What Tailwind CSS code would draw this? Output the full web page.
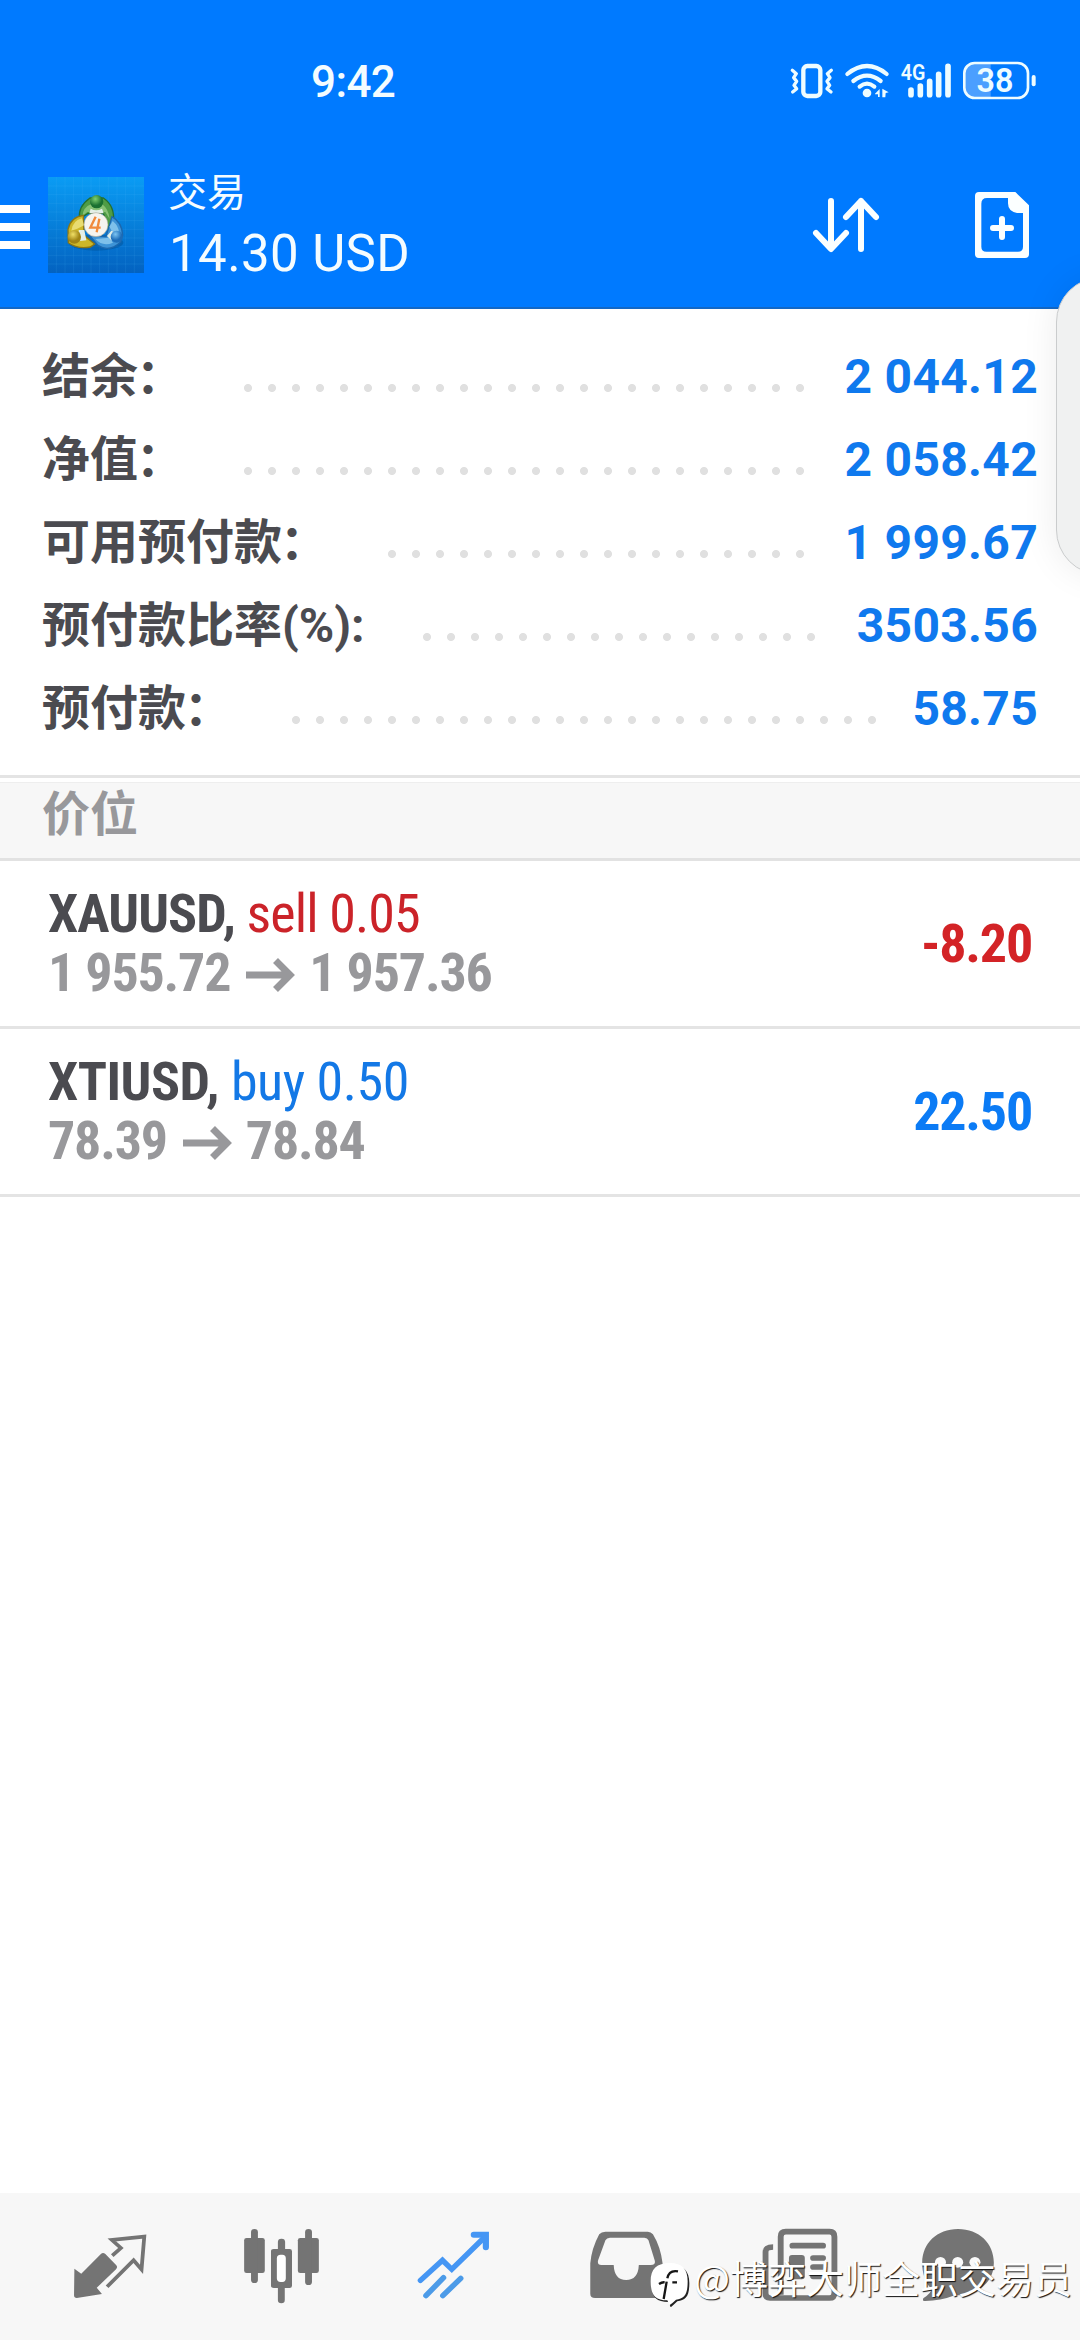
<!DOCTYPE html>
<html lang="zh-CN">
<head>
<meta charset="utf-8">
<title>交易</title>
<script src="https://cdn.jsdelivr.net/npm/@tailwindcss/browser@4"></script>
</head>
<body class="relative flex h-[2340px] w-[1080px] flex-col overflow-hidden bg-white font-['Roboto','Noto_Sans_CJK_SC',sans-serif]">

<header class="flex h-[309px] shrink-0 flex-col border-b-2 border-[#1368c6] bg-[#007aff] text-[#f4fcff]">
  <!-- status bar -->
  <div class="flex h-[150px] shrink-0 items-start pt-[52px]">
    <div class="ml-[311px] h-[60px] w-[100px] text-[44px] leading-[60px] font-medium tracking-[-0.6px]">9:42</div>
    <svg class="mt-[-12px] ml-[349px] h-[80px] w-[320px]" viewBox="0 0 960 240" fill="none" stroke="#eefcff" stroke-linecap="round" stroke-linejoin="round">
      <rect x="130" y="78" width="51" height="90" rx="12" stroke-width="13"/>
      <path d="M97 91l12 10-8 12 9 11-8 12 8 10-12 10M214 91l-12 10 8 12-9 11 8 12-8 10 12 10" stroke-width="10"/>
      <path d="M262 102Q321 54 380 102M280 123Q321 91 362 123M299 140Q321 122 343 140" stroke-width="12.500"/>
      <circle cx="321" cy="159" r="13" fill="#eefcff" stroke="none"/>
      <path d="M345 161l14-14v24h-5v-8h-9zM367 146l19 11-9 2-1 13h-9z" fill="#eefcff" stroke="none"/>
      <text x="422" y="120" font-size="65" font-weight="600" fill="#eefcff" stroke="none" textLength="74" lengthAdjust="spacingAndGlyphs">4G</text>
      <path d="M453 150v14M481 138v26M509 124v40M536 103v61M564 79v85" stroke-width="17"/>
      <path d="M640 71h52v102h-52q-24 0-24-24V95q0-24 24-24z" fill="#4b9fff" stroke="none"/>
      <rect x="613" y="69" width="191" height="105" rx="31" stroke-width="8"/>
      <path d="M821 111v22" stroke-width="12"/>
      <text x="705" y="156" font-size="97" font-weight="600" fill="#eefcff" stroke="none" text-anchor="middle">38</text>
    </svg>
  </div>
  <!-- title bar -->
  <div class="flex h-[157px] items-start">
    <div class="flex w-[30px] flex-col gap-[10px] pt-[55px]">
      <div class="h-2 bg-white"></div>
      <div class="h-2 bg-white"></div>
      <div class="h-2 bg-white"></div>
    </div>
    <svg class="mt-[27px] ml-[18px] size-[96px]" viewBox="24 21 288 288">
      <defs>
        <linearGradient id="bg" x1="0" y1="0" x2="0" y2="1"><stop offset="0" stop-color="#0a9cf4"/><stop offset="1" stop-color="#0362c0"/></linearGradient>
        <radialGradient id="gr" cx=".4" cy=".3"><stop offset="0" stop-color="#7fd070"/><stop offset="1" stop-color="#1a7030"/></radialGradient>
        <radialGradient id="ye" cx=".4" cy=".3"><stop offset="0" stop-color="#f0df66"/><stop offset="1" stop-color="#a08414"/></radialGradient>
        <radialGradient id="bl" cx=".4" cy=".3"><stop offset="0" stop-color="#7cc4f2"/><stop offset="1" stop-color="#1c6cb8"/></radialGradient>
      </defs>
      <path fill="url(#bg)" d="M24 21h288v288H24z"/>
      <path d="M49 21v288M75 21v288M101 21v288M127 21v288M153 21v288M179 21v288M205 21v288M231 21v288M257 21v288M283 21v288M24 48h288M24 74h288M24 100h288M24 126h288M24 152h288M24 178h288M24 204h288M24 230h288M24 256h288M24 282h288" stroke="#55b8f5" stroke-opacity=".2" stroke-width="2"/>
      <ellipse cx="168" cy="218" rx="82" ry="24" fill="#034f92" opacity=".45"/>
      <path d="M119 146Q113 110 150 84L190 84Q226 108 220 158L204 174 190 130H144z" fill="#4f9c46" stroke="#24702f" stroke-width="4"/>
      <path d="M128 137Q129 112 153 103L187 103Q206 118 209 147L196 126H142z" fill="#86c174"/>
      <path d="M130 136Q92 141 84 178L85 218Q112 238 151 231L164 222 132 196z" fill="#cdb728" stroke="#8a7616" stroke-width="4"/>
      <path d="M126 145Q99 151 94 182L112 176 132 166z" fill="#e8dc70"/>
      <path d="M216 140Q246 157 248 195L242 216Q208 248 175 227L149 197 198 200z" fill="#3d93d6" stroke="#1c67ad" stroke-width="4"/>
      <path d="M218 153Q236 168 237 187L216 184 208 170zM166 207Q188 231 219 218L207 203z" fill="#7ec0ea"/>
      <path d="M152 116q16 10 34 0l5 14h-43zM116 180l17 0 6 31-20 2zM201 198l13-16 8 4-7 26z" fill="#e4efe8"/>
      <circle cx="170" cy="95" r="20" fill="url(#gr)"/>
      <circle cx="103" cy="201" r="20" fill="url(#ye)"/>
      <circle cx="230" cy="200" r="18" fill="url(#bl)"/>
      <circle cx="168" cy="164" r="36" fill="#f6f4ef" stroke="#999984" stroke-width="1.5"/>
      <path d="M167 140L151 173H182M178 146L170 187" fill="none" stroke="#f08a3c" stroke-width="7"/>
    </svg>
    <div class="ml-6 flex flex-col gap-[6px] pt-[18px]">
      <div class="h-[50px] text-[39px] leading-[50px]">交易</div>
      <div class="h-[60px] pl-px text-[51px] leading-[60px] tracking-[0.4px]">14.30 USD</div>
    </div>
    <svg class="mt-[10px] ml-auto h-[147px] w-[320px]" viewBox="0 0 960 441" fill="none" stroke="#fbffff" stroke-width="18" stroke-linecap="round" stroke-linejoin="round">
      <path d="M213 123v143M168 219l45 48 45-48M303 267V123M258 171l45-48 45 48"/>
      <path d="M645 108q0-12 12-12H766L807 136V282q0 12-12 12H657q-12 0-12-12zM664 131V260q0 15 15 15H774q15 0 15-15V159H771Q744 154 744 130V114H681Q664 114 664 131z" fill="#fbffff" fill-rule="evenodd" stroke="none"/>
      <path d="M699 204h54M726 177v54"/>
    </svg>
  </div>
</header>

<!-- account summary -->
<section class="flex h-[469px] shrink-0 flex-col border-b-[3px] border-[#e4e4e4] px-[42px] pt-[26px] text-[48px] font-bold text-[#4b4b50]">
  <div class="flex h-[83px] items-center">
    <div class="w-[194px] leading-[83px] whitespace-nowrap">结余<span class="ml-[-2px]">：</span></div>
    <div class="mt-[23px] h-6 w-[576px] bg-[radial-gradient(circle,#e0e0e0_3.6px,transparent_4.4px)] bg-[size:24px_24px]"></div>
    <div class="ml-auto leading-[83px] tracking-[0.3px] text-[#0f79ee]">2 044.12</div>
  </div>
  <div class="flex h-[83px] items-center">
    <div class="w-[194px] leading-[83px] whitespace-nowrap">净值<span class="ml-[-2px]">：</span></div>
    <div class="mt-[23px] h-6 w-[576px] bg-[radial-gradient(circle,#e0e0e0_3.6px,transparent_4.4px)] bg-[size:24px_24px]"></div>
    <div class="ml-auto leading-[83px] tracking-[0.3px] text-[#0f79ee]">2 058.42</div>
  </div>
  <div class="flex h-[83px] items-center">
    <div class="w-[338px] leading-[83px] whitespace-nowrap">可用预付款<span class="ml-[-2px]">：</span></div>
    <div class="mt-[23px] h-6 w-[432px] bg-[radial-gradient(circle,#e0e0e0_3.6px,transparent_4.4px)] bg-[size:24px_24px]"></div>
    <div class="ml-auto leading-[83px] tracking-[0.3px] text-[#0f79ee]">1 999.67</div>
  </div>
  <div class="flex h-[83px] items-center">
    <div class="w-[373px] leading-[83px] whitespace-nowrap">预付款比率(%):</div>
    <div class="mt-[23px] h-6 w-[408px] bg-[radial-gradient(circle,#e0e0e0_3.6px,transparent_4.4px)] bg-[size:24px_24px]"></div>
    <div class="ml-auto leading-[83px] tracking-[0.3px] text-[#0f79ee]">3503.56</div>
  </div>
  <div class="flex h-[83px] items-center">
    <div class="w-[242px] leading-[83px] whitespace-nowrap">预付款<span class="ml-[-2px]">：</span></div>
    <div class="mt-[23px] h-6 w-[600px] bg-[radial-gradient(circle,#e0e0e0_3.6px,transparent_4.4px)] bg-[size:24px_24px]"></div>
    <div class="ml-auto leading-[83px] tracking-[0.3px] text-[#0f79ee]">58.75</div>
  </div>
</section>

<!-- positions -->
<h2 class="mt-1 h-[79px] shrink-0 border-t border-b-[3px] border-t-[#eeeeee] border-b-[#e2e2e2] bg-[#f7f7f7] px-[42px] text-[48px] leading-[63px] font-bold text-[#98989b]">价位</h2>
<main class="grow text-[54px] leading-[59px] font-stretch-condensed">
  <div class="flex h-[168px] items-center justify-between border-b-[3px] border-[#e4e4e4] px-12">
    <div class="pb-0.5">
      <div class="tracking-[-0.9px]"><span class="font-bold text-[#4b4b50]">XAUUSD,</span> <span class="text-[#cb2329]">sell 0.05</span></div>
      <div class="flex items-center font-bold tracking-[-1.2px] text-[#98989b]">
        <span>1 955.72</span>
        <svg class="mt-1.5 mr-[14px] ml-[16px] h-[34px] w-[49px]" viewBox="0 0 49 34" fill="none" stroke="#98989b" stroke-width="7"><path d="M0 17H43M29.500 2.500L44 17 29.500 31.500"/></svg>
        <span>1 957.36</span>
      </div>
    </div>
    <div class="font-bold tracking-[-1.2px] text-[#d32326]">-8.20</div>
  </div>
  <div class="flex h-[168px] items-center justify-between border-b-[3px] border-[#e4e4e4] px-12">
    <div class="pb-0.5">
      <div class="tracking-[-0.5px]"><span class="font-bold text-[#4b4b50]">XTIUSD,</span> <span class="text-[#1378e6]">buy 0.50</span></div>
      <div class="flex items-center font-bold tracking-[-1.2px] text-[#98989b]">
        <span>78.39</span>
        <svg class="mt-1.5 mr-[14px] ml-[16px] h-[34px] w-[49px]" viewBox="0 0 49 34" fill="none" stroke="#98989b" stroke-width="7"><path d="M0 17H43M29.500 2.500L44 17 29.500 31.500"/></svg>
        <span>78.84</span>
      </div>
    </div>
    <div class="font-bold tracking-[-1.2px] text-[#0b7bf5]">22.50</div>
  </div>
</main>

<!-- tab bar -->
<nav class="flex h-[147px] shrink-0 bg-[#f7f7f7] px-6">
  <svg class="h-[147px] w-[172px]" viewBox="69.700 39 499.500 441" preserveAspectRatio="none" fill="#747474">
    <path d="M216 266L236 281 293 222Q299 216 306 222L337 255Q343 261 337 268L281 323 296 342 223 354Q215 354 215 346z"/>
    <path d="M326 227L351 204 325 180 419 170 411 268 388 241 311 320" fill="none" stroke="#747474" stroke-width="11"/>
  </svg>
  <svg class="h-[147px] w-[172px]" viewBox="569.200 39 499.500 441" preserveAspectRatio="none" fill="#747474">
    <rect x="709" y="174" width="60" height="105" rx="7"/><rect x="729" y="147" width="20" height="162" rx="10"/>
    <rect x="865" y="174" width="61" height="105" rx="7"/><rect x="886" y="147" width="20" height="168" rx="10"/>
    <rect x="807" y="176" width="21" height="50" rx="10"/><rect x="807" y="300" width="20" height="70" rx="10"/>
    <path fill="#fff" d="M800 215h35v100h-35z"/>
    <path fill-rule="evenodd" d="M795 207h46q7 0 7 7v103q0 7-7 7h-46q-8 0-8-7V214q0-7 8-7zM815 224q-11 0-11 11v60q0 11 11 11h5q10 0 10-11v-60q0-11-10-11z"/>
  </svg>
  <svg class="h-[147px] w-[172px]" viewBox="1068.700 39 499.500 441" preserveAspectRatio="none" fill="none" stroke="#4596f4" stroke-width="16" stroke-linecap="round">
    <path d="M1221 301L1285 241 1312 268 1408 171"/>
    <path d="M1376 164H1411V202" stroke-width="18"/>
    <path d="M1237 347L1288 293M1286 347L1338 295" stroke="#4c9be8"/>
  </svg>
  <svg class="h-[147px] w-[172px]" viewBox="0 39 499.500 441" preserveAspectRatio="none" fill="#747474">
    <path fill-rule="evenodd" d="M190 155H313Q322 155 328 163 350 200 356 250V354H160Q146 354 146 341V250Q150 205 172 163 178 155 190 155zM203 173Q194 173 190 181L169 240Q165 255 178 255H214Q216 300 250 300 285 300 287 255H322Q337 255 333 241L315 181Q312 173 303 173z"/>
  </svg>
  <svg class="h-[147px] w-[172px]" viewBox="499.500 39 499.500 441" preserveAspectRatio="none" fill="none" stroke="#747474" stroke-width="17">
    <path d="M699 344V170Q699 155 714 155H841Q855 155 855 170V338Q855 354 841 354H668Q655 354 655 340V215Q655 201 677 201"/>
    <path d="M733 197h89M793 234h29M793 261h29M793 289h29" stroke-linecap="round"/>
    <rect x="723" y="225" width="46" height="73" rx="9" fill="#747474" stroke="none"/>
  </svg>
  <svg class="h-[147px] w-[172px]" viewBox="999 39 499.500 441" preserveAspectRatio="none" fill="#747474">
    <path d="M1214 147C1275 147 1318 190 1318 248 1318 310 1270 345 1205 346Q1160 364 1114 363 1110 359 1114 354 1136 340 1137 328C1118 305 1110 280 1110 248 1110 190 1153 147 1214 147z"/>
    <g fill="#fafafa"><circle cx="1163" cy="247" r="16"/><circle cx="1213" cy="247" r="16"/><circle cx="1263" cy="247" r="16"/></g>
  </svg>
</nav>

<!-- edge panel handle, clipped by the right side of the screen -->
<div class="absolute top-[230px] right-0 h-[400px] w-[84px] overflow-hidden">
  <div class="mt-[47px] ml-[60px] h-[298px] w-[90px] rounded-[50px] border border-[#cacccd] bg-[#f0f1f1] shadow-[0_0_36px_rgba(0,0,0,0.08)]"></div>
</div>

<!-- watermark -->
<div class="absolute top-[2247px] left-[650px] flex items-center">
  <svg class="mt-2 h-[52px] w-[40px]" viewBox="30 126 120 156">
    <path d="M90 153C128 153 146 170 146 207 146 250 134 258 110 262Q102 270 90 280L84 264C45 264 32 248 32 207 32 168 50 153 90 153z" fill="#222" transform="translate(2 3)"/>
    <path d="M90 150C126 150 143 168 143 205 143 248 132 256 108 260Q100 268 88 277L82 262C45 262 32 246 32 205 32 168 50 150 90 150z" fill="#fff"/>
    <path d="M114 175Q87 170 82 196M80 206L71 258M57 213Q66 207 74 208M97 208H111" fill="none" stroke="#161616" stroke-width="7"/>
  </svg>
  <span class="ml-1 font-['Noto_Sans_CJK_SC',sans-serif] text-[38px] leading-[52px] whitespace-nowrap text-white [text-shadow:1px_1px_1px_#111]">@博弈大师全职交易员</span>
</div>
</body>
</html>
